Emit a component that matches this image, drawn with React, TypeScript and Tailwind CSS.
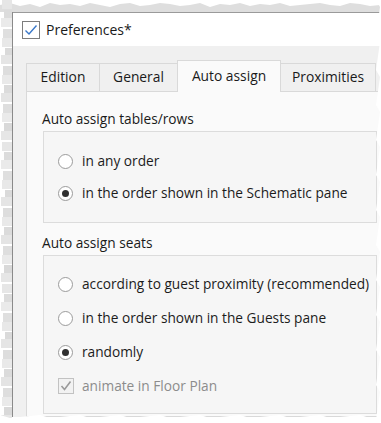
import React from 'react';

const font = "font-['Open_Sans',sans-serif]";

// torn-edge shadow drawn around the screenshot
const topJag = [5, 3, 6, 4, 7, 3, 5, 4, 6, 3, 5, 7, 4, 3, 6, 5, 3, 4, 6, 5, 3, 7, 4, 5, 3, 6, 4, 5, 3, 6, 5, 4, 3, 5, 6, 3, 4, 6, 5, 3];
const leftBands = [
  [0, 10, '#e6e6e6'], [10, 8, '#dcdcdc'], [18, 11, '#eaeaea'], [29, 9, '#dfdfdf'], [38, 10, '#e8e8e8'],
  [48, 7, '#dadada'], [55, 11, '#e5e5e5'], [66, 9, '#dddddd'], [75, 10, '#e9e9e9'], [85, 8, '#dbdbdb'],
  [93, 11, '#e4e4e4'], [104, 9, '#dedede'], [113, 10, '#eaeaea'], [123, 8, '#d9d9d9'], [131, 11, '#e6e6e6'],
];

function TopEdge() {
  const pts = topJag.map((y, i) => `${i * 10},${y}`).join(' ');
  return (
    <svg className="absolute left-0 top-0" width="381" height="13">
      <polygon points={`0,12 ${pts} 381,4 381,12`} fill="#dedede" />
      <line x1="12" y1="12.5" x2="381" y2="12.5" stroke="#9a9a9a" />
    </svg>
  );
}

function LeftEdge() {
  const rows: React.ReactNode[] = [];
  for (let k = 0; k < 3; k++) {
    leftBands.forEach(([y, w, c], i) => {
      rows.push(<rect key={`${k}-${i}`} x={12 - (w as number)} y={(y as number) + k * 142} width={w as number} height={9} fill={c as string} />);
    });
  }
  return (
    <svg className="absolute left-0 top-0" width="13" height="418">
      {rows}
      <line x1="12.5" y1="12" x2="12.5" y2="417" stroke="#8a8a8a" />
    </svg>
  );
}

function RightEdge() {
  const pts: string[] = [];
  for (let y = 0; y <= 423; y += 7) pts.push(`${376 + ((y * 7) % 5)},${y}`);
  return (
    <svg className="absolute left-0 top-0 pointer-events-none" width="381" height="423">
      <polygon points={`381,0 ${pts.join(' ')} 381,423`} fill="#ffffff" />
      <polygon points={`0,423 0,417 ${Array.from({ length: 39 }, (_, i) => `${i * 10},${415 + ((i * 3) % 4)}`).join(' ')} 381,416 381,423`} fill="#ffffff" />
    </svg>
  );
}

function Radio({ checked }: { checked?: boolean }) {
  return (
    <svg width="15" height="15" viewBox="0 0 15 15" className="shrink-0">
      <circle cx="7.5" cy="7.5" r="7" fill="#ffffff" stroke="#9b9b9b" />
      {checked && <circle cx="7.5" cy="7.5" r="3.5" fill="#303030" />}
    </svg>
  );
}

function Option({ label, checked }: { label: string; checked?: boolean }) {
  return (
    <div className="flex items-center gap-[9px] h-[32px]">
      <Radio checked={checked} />
      <span className="text-[13.7px] text-[#1c1c1c] leading-[20px] whitespace-nowrap">{label}</span>
    </div>
  );
}

const tabs = [
  { name: 'Edition', w: 'w-[74px]' },
  { name: 'General', w: 'w-[79px]' },
  { name: 'Auto assign', w: 'w-[104px]', active: true },
  { name: 'Proximities', w: 'w-[96px]' },
];

export default function App() {
  return (
    <div className={`relative w-[381px] h-[423px] bg-white overflow-hidden ${font}`}>
      <TopEdge />
      <LeftEdge />
      <div className="ml-[13px] mt-[13px] w-[368px] h-[404px] flex flex-col">
        {/* title bar */}
        <div className="h-[33px] bg-white flex items-center pl-[9px] gap-[6px]">
          <svg width="18" height="18" viewBox="0 0 18 18">
            <rect x="0.5" y="0.5" width="17" height="17" fill="#ffffff" stroke="#7d7d7d" />
            <path d="M3.5 9.5 L7 13 L14.5 4.5" fill="none" stroke="#3a78c9" strokeWidth="1.4" />
          </svg>
          <span className="text-[14px] text-[#1a1a1a] leading-[20px]">Preferences*</span>
        </div>

        {/* content */}
        <div className="flex-1 bg-[#f0f0f0] pl-[13px] pt-[14px] flex flex-col">
          <div className="flex items-end h-[31px]">
            {tabs.map((t) =>
              t.active ? (
                <div
                  key={t.name}
                  className={`${t.w} -ml-px h-[32px] -mb-px relative z-10 bg-[#fafafa] border border-b-0 border-[#d9d9d9] flex items-center justify-center text-[13.8px] text-[#1a1a1a]`}
                >
                  {t.name}
                </div>
              ) : (
                <div
                  key={t.name}
                  className={`${t.w} first:ml-0 -ml-px h-[28px] bg-[#f0f0f0] border border-b-0 border-[#d9d9d9] flex items-center justify-center text-[13.8px] text-[#1a1a1a]`}
                >
                  {t.name}
                </div>
              )
            )}
          </div>

          <div className="flex-1 bg-[#fafafa] border border-r-0 border-[#d9d9d9] pl-[16px] pt-[17px]">
            <div className="text-[13.7px] leading-[20px] text-[#1a1a1a] -ml-px">Auto assign tables/rows</div>
            <div className="mt-[2px] w-[334px] bg-[#f6f6f6] border border-[#dcdcdc] pl-[14px] py-[13px]">
              <Option label="in any order" />
              <Option label="in the order shown in the Schematic pane" checked />
            </div>

            <div className="mt-[10px] text-[13.7px] leading-[20px] text-[#1a1a1a] -ml-px">Auto assign seats</div>
            <div className="mt-[2px] w-[334px] bg-[#f6f6f6] border border-[#dcdcdc] pl-[14px] pt-[11px] pb-[10px]">
              <div className="[&>div]:h-[34px]">
                <Option label="according to guest proximity (recommended)" />
                <Option label="in the order shown in the Guests pane" />
                <Option label="randomly" checked />
                <div className="flex items-center gap-[8px]">
                  <svg width="16" height="16" viewBox="0 0 16 16" className="shrink-0">
                    <rect x="0.5" y="0.5" width="15" height="15" fill="#f2f2f2" stroke="#c2c2c2" />
                    <path d="M3.5 8 L6.5 11.5 L12.5 3.5" fill="none" stroke="#9a9a9a" strokeWidth="1.6" />
                  </svg>
                  <span className="text-[13.7px] leading-[20px] text-[#8c8c8c]">animate in Floor Plan</span>
                </div>
              </div>
            </div>
          </div>
        </div>
      </div>
      <RightEdge />
    </div>
  );
}
